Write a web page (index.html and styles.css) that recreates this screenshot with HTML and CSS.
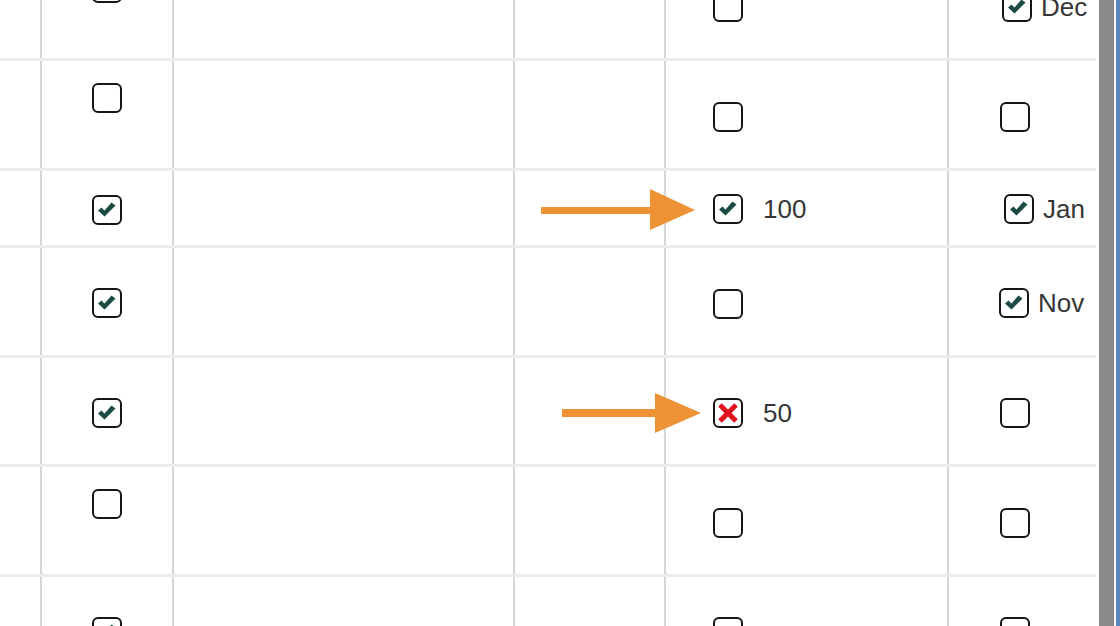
FILE: index.html
```html
<!DOCTYPE html>
<html lang="en">
<head>
<meta charset="utf-8">
<title>Table</title>
<link rel="stylesheet" href="styles.css">
</head>
<body>
<div class="page">
  <div class="table">
    <div class="row row-tall first">
      <div class="cell"></div>
      <div class="cell c2 top"><span class="cb"></span></div>
      <div class="cell"></div>
      <div class="cell"></div>
      <div class="cell c5 mid"><span class="cb"></span></div>
      <div class="cell c6 mid dec"><span class="cb on"><svg viewBox="0 0 26 26"><path d="M4 13.5 L7.5 10.5 L10.5 13.5 L17.5 5.5 L21.5 8.5 L10.5 19.5 Z"/></svg></span><span class="lbl">Dec</span></div>
    </div>
    <div class="row row-tall">
      <div class="cell"></div>
      <div class="cell c2 top"><span class="cb"></span></div>
      <div class="cell"></div>
      <div class="cell"></div>
      <div class="cell c5 mid"><span class="cb"></span></div>
      <div class="cell c6 mid"><span class="cb"></span></div>
    </div>
    <div class="row row-short">
      <div class="cell"></div>
      <div class="cell c2 short"><span class="cb on"><svg viewBox="0 0 26 26"><path d="M4 13.5 L7.5 10.5 L10.5 13.5 L17.5 5.5 L21.5 8.5 L10.5 19.5 Z"/></svg></span></div>
      <div class="cell"></div>
      <div class="cell"></div>
      <div class="cell c5 short"><span class="cb on"><svg viewBox="0 0 26 26"><path d="M4 13.5 L7.5 10.5 L10.5 13.5 L17.5 5.5 L21.5 8.5 L10.5 19.5 Z"/></svg></span><span class="lbl wide">100</span></div>
      <div class="cell c6 short jan"><span class="cb on"><svg viewBox="0 0 26 26"><path d="M4 13.5 L7.5 10.5 L10.5 13.5 L17.5 5.5 L21.5 8.5 L10.5 19.5 Z"/></svg></span><span class="lbl">Jan</span></div>
    </div>
    <div class="row row-tall">
      <div class="cell"></div>
      <div class="cell c2 low"><span class="cb on"><svg viewBox="0 0 26 26"><path d="M4 13.5 L7.5 10.5 L10.5 13.5 L17.5 5.5 L21.5 8.5 L10.5 19.5 Z"/></svg></span></div>
      <div class="cell"></div>
      <div class="cell"></div>
      <div class="cell c5 mid"><span class="cb"></span></div>
      <div class="cell c6 low nov"><span class="cb on"><svg viewBox="0 0 26 26"><path d="M4 13.5 L7.5 10.5 L10.5 13.5 L17.5 5.5 L21.5 8.5 L10.5 19.5 Z"/></svg></span><span class="lbl">Nov</span></div>
    </div>
    <div class="row row-mid">
      <div class="cell"></div>
      <div class="cell c2 low"><span class="cb on"><svg viewBox="0 0 26 26"><path d="M4 13.5 L7.5 10.5 L10.5 13.5 L17.5 5.5 L21.5 8.5 L10.5 19.5 Z"/></svg></span></div>
      <div class="cell"></div>
      <div class="cell"></div>
      <div class="cell c5 low"><span class="cb bad"><svg viewBox="0 0 26 26"><path d="M5 5 L21 21 M21 5 L5 21"/></svg></span><span class="lbl wide">50</span></div>
      <div class="cell c6 low"><span class="cb"></span></div>
    </div>
    <div class="row row-tall">
      <div class="cell"></div>
      <div class="cell c2 top"><span class="cb"></span></div>
      <div class="cell"></div>
      <div class="cell"></div>
      <div class="cell c5 mid"><span class="cb"></span></div>
      <div class="cell c6 mid"><span class="cb"></span></div>
    </div>
    <div class="row row-tall">
      <div class="cell"></div>
      <div class="cell c2 low"><span class="cb on"><svg viewBox="0 0 26 26"><path d="M4 13.5 L7.5 10.5 L10.5 13.5 L17.5 5.5 L21.5 8.5 L10.5 19.5 Z"/></svg></span></div>
      <div class="cell"></div>
      <div class="cell"></div>
      <div class="cell c5 low"><span class="cb"></span></div>
      <div class="cell c6 low"><span class="cb"></span></div>
    </div>
  </div>
  <div class="scroll-gap"></div>
  <div class="thumb"></div>
  <div class="scroll-gap2"></div>
  <div class="edge"></div>
  <svg class="arrows" viewBox="0 0 1120 626" width="1120" height="626">
    <rect x="541" y="207" width="111" height="7" />
    <polygon points="650,189 695,210 650,230" />
    <rect x="562" y="409" width="95" height="8" />
    <polygon points="655,393 701,413 655,433" />
  </svg>
</div>
</body>
</html>
```
FILE: styles.css
```css
html, body {
  margin: 0;
  padding: 0;
  background: #ffffff;
}

body {
  font-family: "Liberation Sans", Arial, sans-serif;
  color: #333333;
}

.page {
  position: relative;
  width: 1120px;
  height: 626px;
  overflow: hidden;
  display: flex;
  align-items: stretch;
}

.table {
  width: 1096px;
  flex: none;
  display: flex;
  flex-direction: column;
}

.row {
  display: grid;
  grid-template-columns: 42px 132px 341px 151px 283px 147px;
  border-bottom: 3px solid #ececec;
  flex: none;
}

.row.first {
  margin-top: -49px;
}

.row-tall { height: 107px; }
.row-short { height: 74px; }
.row-mid { height: 106px; }

.cell {
  border-right: 2px solid #d6d6d6;
  display: flex;
  align-items: flex-start;
  box-sizing: border-box;
  overflow: hidden;
}

.cell:last-child {
  border-right: none;
}

.c2 {
  justify-content: center;
  padding-left: 0;
}

.c5 {
  padding-left: 47px;
}

.c6 {
  padding-left: 51px;
}

.c6.dec { padding-left: 53px; }
.c6.jan { padding-left: 55px; }
.c6.nov { padding-left: 50px; }

.top { padding-top: 22px; }
.mid { padding-top: 41px; }
.low { padding-top: 40px; }
.short { padding-top: 23px; }
.c2.short { padding-top: 24px; }

.cb {
  width: 30px;
  height: 30px;
  box-sizing: border-box;
  border: 2px solid #161616;
  border-radius: 6px;
  background: #ffffff;
  flex: none;
  display: flex;
  align-items: center;
  justify-content: center;
}

.cb svg {
  width: 26px;
  height: 26px;
  display: block;
}

.cb.on svg path {
  fill: #1c4a44;
}

.cb.bad svg path {
  fill: none;
  stroke: #e0121c;
  stroke-width: 5;
}

.lbl {
  font-size: 26px;
  line-height: 30px;
  margin-left: 9px;
  color: #363636;
  white-space: nowrap;
}

.lbl.wide {
  margin-left: 20px;
}

.scroll-gap {
  width: 3px;
  flex: none;
}

.thumb {
  width: 15px;
  flex: none;
  background: #8a8a8a;
}

.scroll-gap2 {
  width: 2px;
  flex: none;
}

.edge {
  width: 4px;
  flex: none;
  background: #5b87c0;
}

.arrows {
  position: absolute;
  left: 0;
  top: 0;
  pointer-events: none;
}

.arrows rect,
.arrows polygon {
  fill: #ee9236;
}
```
